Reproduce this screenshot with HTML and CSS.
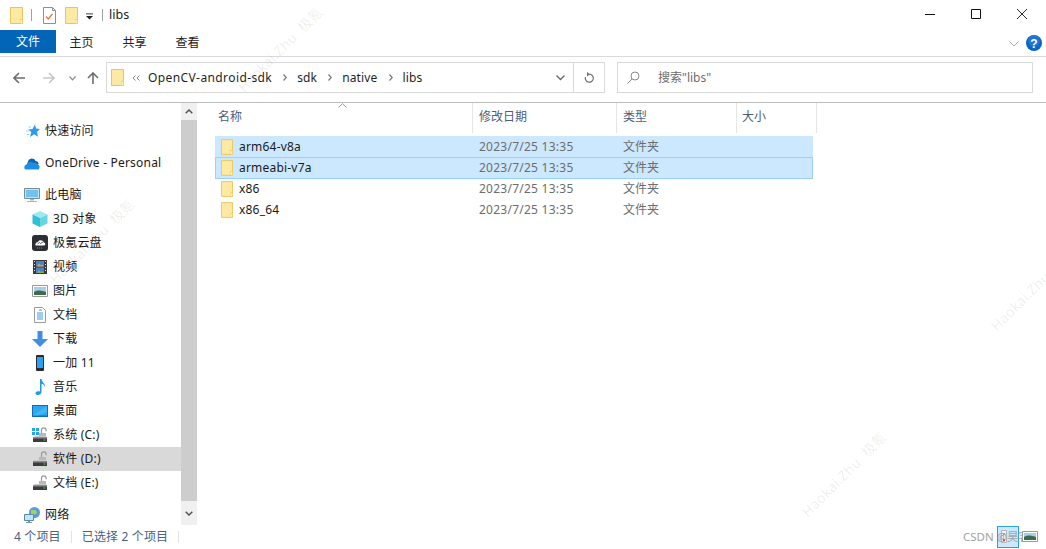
FILE: index.html
```html
<!DOCTYPE html>
<html lang="zh">
<head>
<meta charset="utf-8">
<title>libs</title>
<link rel="stylesheet" href="styles.css">
</head>
<body>
<svg class="defs" width="0" height="0" aria-hidden="true">
  <symbol id="folder" viewBox="0 0 13 17">
    <path d="M.5.5h12v16H.5z" fill="#fde9a3" stroke="#eac558"/>
    <path d="M10 12h3v5h-3z" fill="#f2cf6a"/>
    <path d="M10.5 13h1.5v3h-1.5z" fill="#fff3c4"/>
  </symbol>
  <symbol id="drive" viewBox="0 0 16 16">
    <path d="M9.500 6.500V3.200a2.300 2.300 0 0 1 4.600 0v1" fill="none" stroke="#9a9a9a" stroke-width="1.200"/>
    <path d="M7 6h7v3.500H7z" fill="#b9b9b9"/>
    <path d="M1 10.500 3 9h11l1 1.500z" fill="#c9c9c9"/>
    <path d="M1 10.500h14V15H1z" fill="#3c3c3c"/>
    <path d="M1 10.500h14v1H1z" fill="#8d8d8d"/>
    <path d="M11.500 12.500h2v1h-2z" fill="#45d64b"/>
  </symbol>
</svg>

<div class="window">
  <header class="titlebar">
    <svg class="ic-folder tb-first"><use href="#folder"/></svg>
    <span class="tb-sep"></span>
    <svg class="ic-check" viewBox="0 0 13 17">
      <path d="M.5.500h9l3 3v13H.5z" fill="#fff" stroke="#8f8f8f"/>
      <path d="M9.500.500v3h3" fill="none" stroke="#8f8f8f"/>
      <path d="M3 9.500l2.200 2.500L9.500 7" fill="none" stroke="#e8703f" stroke-width="1.200"/>
    </svg>
    <svg class="ic-folder tb-second"><use href="#folder"/></svg>
    <svg class="ic-qat" viewBox="0 0 8 7">
      <path d="M0 0h8v1H0z" fill="#222"/><path d="M0 3h8L4 7z" fill="#222"/>
    </svg>
    <span class="tb-sep tb-sep2"></span>
    <span class="tb-title">libs</span>
    <div class="controls">
      <span class="ctl"><svg class="ic-ctl" viewBox="0 0 10 10"><path d="M0 5.500h10" stroke="#111"/></svg></span>
      <span class="ctl"><svg class="ic-ctl" viewBox="0 0 10 10"><path d="M.5.500h9v9h-9z" fill="none" stroke="#111"/></svg></span>
      <span class="ctl"><svg class="ic-ctl" viewBox="0 0 10 10"><path d="M0 0l10 10M10 0L0 10" stroke="#111" stroke-width=".9"/></svg></span>
    </div>
  </header>

  <nav class="ribbon">
    <span class="tab tab-file">文件</span>
    <span class="tab">主页</span>
    <span class="tab">共享</span>
    <span class="tab">查看</span>
    <svg class="ic-collapse" viewBox="0 0 10 6"><path d="M.5.500 5 5 9.500.500" fill="none" stroke="#a8a8a8"/></svg>
    <svg class="ic-help" viewBox="0 0 16 16">
      <circle cx="8" cy="8" r="8" fill="#0a66c2"/>
      <circle cx="8" cy="6" r="6" fill="#2f86dc" opacity=".5"/>
      <text x="8" y="12.500" text-anchor="middle" class="help-q">?</text>
    </svg>
  </nav>

  <div class="navbar">
    <svg class="ic-nav nav-back" viewBox="0 0 12 12"><path d="M12 6H1.500M6 1 1 6l5 5" fill="none" stroke="#6e6e6e" stroke-width="1.600"/></svg>
    <svg class="ic-nav nav-fwd" viewBox="0 0 12 12"><path d="M0 6h10.500M6 1l5 5-5 5" fill="none" stroke="#c8c8c8" stroke-width="1.600"/></svg>
    <svg class="ic-recent" viewBox="0 0 7 5"><path d="M.5.500 3.500 3.800 6.500.500" fill="none" stroke="#8a8a8a" stroke-width="1.200"/></svg>
    <svg class="ic-nav nav-up" viewBox="0 0 12 12"><path d="M6 12V1.500M1 6l5-5 5 5" fill="none" stroke="#6e6e6e" stroke-width="1.600"/></svg>
    <div class="address">
      <svg class="ic-folder addr-folder"><use href="#folder"/></svg>
      <svg class="ic-more" viewBox="0 0 8 6"><path d="M3.500.500 1 3l2.500 2.500M7.500.500 5 3l2.500 2.500" fill="none" stroke="#8a8a8a"/></svg>
      <span class="crumb crumb-long">OpenCV-android-sdk</span>
      <svg class="ic-crumb" viewBox="0 0 4 7"><path d="M.5.500 3.200 3.500.5 6.500" fill="none" stroke="#7a7a7a" stroke-width="1.200"/></svg>
      <span class="crumb">sdk</span>
      <svg class="ic-crumb" viewBox="0 0 4 7"><path d="M.5.500 3.200 3.500.5 6.500" fill="none" stroke="#7a7a7a" stroke-width="1.200"/></svg>
      <span class="crumb">native</span>
      <svg class="ic-crumb" viewBox="0 0 4 7"><path d="M.5.500 3.200 3.500.5 6.500" fill="none" stroke="#7a7a7a" stroke-width="1.200"/></svg>
      <span class="crumb">libs</span>
      <svg class="ic-addr-down" viewBox="0 0 9 6"><path d="M.5.500 4.500 4.500 8.500.500" fill="none" stroke="#666" stroke-width="1.300"/></svg>
      <span class="refresh">
        <svg class="ic-refresh" viewBox="0 0 10 11"><path d="M5.500 2.200A4 4 0 1 1 1.500 5" fill="none" stroke="#6e6e6e" stroke-width="1.200"/><path d="M3 0l3 2.200L3 4.400z" fill="#6e6e6e"/></svg>
      </span>
    </div>
    <div class="search">
      <svg class="ic-search" viewBox="0 0 13 13"><circle cx="8" cy="5" r="4" fill="none" stroke="#8a8a8a"/><path d="M5 8 .5 12.500" stroke="#8a8a8a"/></svg>
      <span class="search-text">搜索"libs"</span>
    </div>
  </div>

  <main class="main">
    <aside class="sidebar">
      <div class="side-row lv1">
        <svg class="side-ic" viewBox="0 0 16 16"><path d="M11 1.500l1 4 4 .5-3 2.800 1 5-3.800-2.500L6 14l1.300-5L4 6.500 8.500 6z" fill="#2d9cf0"/><path d="M4.500 4H7M2 8h2.500M3 11.500h2.500" stroke="#9ed2f7"/></svg>
        <span>快速访问</span>
      </div>
      <div class="side-row lv1 gap">
        <svg class="side-ic" viewBox="0 0 16 16"><path d="M4 6.500C5 3 10 2.500 11.500 6c2 .2 3 1.500 3.200 3L8 13 3 9z" fill="#0f62b4"/><path d="M1.500 14.500C-.5 13.500 0 9.500 3.500 9c.8-2 3.500-3 5.500-1.200 2-.8 3.800 0 4.500 1.700 2 0 3 2.800 1 5z" fill="#1c8fe3"/></svg>
        <span>OneDrive - Personal</span>
      </div>
      <div class="side-row lv1 gap">
        <svg class="side-ic" viewBox="0 0 16 16"><path d="M.5 1.500h15v10H.5z" fill="#bfe6fb" stroke="#7d8a94"/><path d="M2 3h12v7H2z" fill="#6fc3f0"/><path d="M6 12h4v1.500H6zM3 14h10v1H3z" fill="#a8b4bc"/></svg>
        <span>此电脑</span>
      </div>
      <div class="side-row lv2">
        <svg class="side-ic" viewBox="0 0 16 16"><path d="M8 0l7.500 3.500L8 7 .5 3.500z" fill="#9ee9ef"/><path d="M.5 3.500 8 7v9L.5 12.500z" fill="#2fc0d3"/><path d="M15.500 3.500 8 7v9l7.500-3.500z" fill="#68d6e2"/></svg>
        <span>3D 对象</span>
      </div>
      <div class="side-row lv2">
        <svg class="side-ic" viewBox="0 0 16 16"><rect width="16" height="16" rx="3" fill="#2c2e33"/><path d="M4 10.500h8c1.800 0 1.800-3-.2-3C11 4.500 6.500 4.500 6 7c-2-.3-3.500 3.500-2 3.500z" fill="#fff"/><path d="M5.500 9l2-1.500 1 1L11 7" fill="none" stroke="#2c2e33" stroke-width=".8"/><path d="M5 13h6" stroke="#888" stroke-dasharray="1 1"/></svg>
        <span>极氪云盘</span>
      </div>
      <div class="side-row lv2">
        <svg class="side-ic" viewBox="0 0 16 16"><path d="M1 1h14v14H1z" fill="#3a3a3a"/><path d="M4 2h8v5.500H4z" fill="#4e7fc9"/><path d="M4 8.500h8V14H4z" fill="#4e7fc9"/><path d="M5 7.500l2-3 2 2 1-1 2 2z" fill="#d9a83a"/><path d="M5 14l2-3 2 2 1-1 2 2z" fill="#8cb04a"/><path d="M2 2h1v1H2zM2 5h1v1H2zM2 8h1v1H2zM2 11h1v1H2zM13 2h1v1h-1zM13 5h1v1h-1zM13 8h1v1h-1zM13 11h1v1h-1z" fill="#ddd"/></svg>
        <span>视频</span>
      </div>
      <div class="side-row lv2">
        <svg class="side-ic" viewBox="0 0 16 16"><path d="M.5 2.500h15v11H.5z" fill="#fff" stroke="#9a9a9a"/><path d="M2 4h12v8H2z" fill="#a9cfe8"/><path d="M2 9c3-2 6-2 12 0v3H2z" fill="#3f6b4d"/></svg>
        <span>图片</span>
      </div>
      <div class="side-row lv2">
        <svg class="side-ic" viewBox="0 0 16 16"><path d="M2.500.500h8l3 3v12h-11z" fill="#fff" stroke="#9a9a9a"/><path d="M7 3h3M5 6h6M5 8h6M5 10h6M5 12h6" stroke="#3a9ae0"/></svg>
        <span>文档</span>
      </div>
      <div class="side-row lv2">
        <svg class="side-ic" viewBox="0 0 16 16"><path d="M5.500 0h5v8H16l-8 8-8-8h5.500z" fill="#3f8fdc"/></svg>
        <span>下载</span>
      </div>
      <div class="side-row lv2">
        <svg class="side-ic" viewBox="0 0 16 16"><rect x="4" y="0" width="8" height="16" rx="1" fill="#2b2b2b"/><path d="M5 2h6v11H5z" fill="#25a4f5"/></svg>
        <span>一加 11</span>
      </div>
      <div class="side-row lv2">
        <svg class="side-ic" viewBox="0 0 16 16"><path d="M8 0h1.500c0 3 4 4 3.500 8-.5-2-2-3-3.500-3.200V13c0 2-2 3-4 3s-2.800-2-1-3.200c1-.6 2.500-.6 3.500-.2z" fill="#1a9bef"/></svg>
        <span>音乐</span>
      </div>
      <div class="side-row lv2">
        <svg class="side-ic" viewBox="0 0 16 16"><path d="M0 2h16v12H0z" fill="#0d6fb5"/><path d="M1 3h14v9.500H1z" fill="#2aa9f2"/><path d="M15 3v6l-9 3.500H1z" fill="#53bff6" opacity=".6"/></svg>
        <span>桌面</span>
      </div>
      <div class="side-row lv2">
        <svg class="side-ic" viewBox="0 0 16 16"><use href="#drive"/><path d="M0 1h3v3H0zM4 1h3v3H4zM0 5h3v3H0zM4 5h3v3H4z" fill="#26a4ee"/></svg>
        <span>系统 (C:)</span>
      </div>
      <div class="side-row lv2 is-current">
        <svg class="side-ic"><use href="#drive"/></svg>
        <span>软件 (D:)</span>
      </div>
      <div class="side-row lv2">
        <svg class="side-ic"><use href="#drive"/></svg>
        <span>文档 (E:)</span>
      </div>
      <div class="side-row lv1 gap">
        <svg class="side-ic" viewBox="0 0 16 16"><circle cx="10.500" cy="5.500" r="5.500" fill="#5a9bd8"/><path d="M7 3c2-1 3 1 5 0l1 3-3 2-3-1z" fill="#9fd06a"/><path d="M.5 7.500h9v6h-9z" fill="#bfe6fb" stroke="#5d87a8"/><path d="M4 14h2v1H4zM2 15h6v1H2z" fill="#7d93a4"/></svg>
        <span>网络</span>
      </div>
    </aside>

    <div class="scrollbar">
      <span class="sb-btn"><svg class="ic-sb" viewBox="0 0 8 5"><path d="M.7 4.300 4 1l3.300 3.300" fill="none" stroke="#555" stroke-width="1.500"/></svg></span>
      <span class="sb-thumb"></span>
      <span class="sb-btn sb-btn-down"><svg class="ic-sb" viewBox="0 0 8 5"><path d="M.7.700 4 4 7.300.700" fill="none" stroke="#555" stroke-width="1.500"/></svg></span>
    </div>

    <section class="content">
      <div class="thead">
        <span class="th th-name">名称<svg class="ic-sort" viewBox="0 0 9 5"><path d="M.5 4.500 4.500.700 8.500 4.500" fill="none" stroke="#9a9a9a"/></svg></span>
        <span class="th th-date">修改日期</span>
        <span class="th th-type">类型</span>
        <span class="th th-size">大小</span>
      </div>
      <div class="rows">
        <div class="row selected">
          <span class="cell-name"><svg class="ic-folder"><use href="#folder"/></svg>arm64-v8a</span>
          <span class="cell-meta">2023/7/25 13:35</span>
          <span class="cell-meta cell-type">文件夹</span>
        </div>
        <div class="row selected focused">
          <span class="cell-name"><svg class="ic-folder"><use href="#folder"/></svg>armeabi-v7a</span>
          <span class="cell-meta">2023/7/25 13:35</span>
          <span class="cell-meta cell-type">文件夹</span>
        </div>
        <div class="row">
          <span class="cell-name"><svg class="ic-folder"><use href="#folder"/></svg>x86</span>
          <span class="cell-meta">2023/7/25 13:35</span>
          <span class="cell-meta cell-type">文件夹</span>
        </div>
        <div class="row">
          <span class="cell-name"><svg class="ic-folder"><use href="#folder"/></svg>x86_64</span>
          <span class="cell-meta">2023/7/25 13:35</span>
          <span class="cell-meta cell-type">文件夹</span>
        </div>
      </div>
    </section>
  </main>

  <footer class="status">
    <span class="st-count">4 个项目</span>
    <span class="st-sep"></span>
    <span class="st-sel">已选择 2 个项目</span>
    <span class="st-sep"></span>
  </footer>

  <span class="wm wm-a">Haokai.Zhu&nbsp;&nbsp;极氪</span>
  <span class="wm wm-b">Haokai.Zhu&nbsp;&nbsp;极氪</span>
  <span class="wm wm-c">Haokai.Zhu&nbsp;&nbsp;极氪</span>
  <span class="wm wm-d">Haokai.Zhu&nbsp;&nbsp;极氪</span>

  <div class="csdn">
    <span class="csdn-box">
      <svg class="csdn-doc" viewBox="0 0 6 13"><path d="M.5.500h5v12h-5z" fill="#eef6fc" stroke="#b5b5b5"/><path d="M2 3h2v2H2z" fill="#999"/><path d="M2 9h2v2H2z" fill="#d9363e"/></svg>
    </span>
    <span class="csdn-text">CSDN @昊客</span>
    <svg class="csdn-pic" viewBox="0 0 16 11"><path d="M.5.500h15v10H.5z" fill="#fff" stroke="#9a9a9a"/><path d="M2 2h12v7H2z" fill="#a9cfe8"/><path d="M2 6c3-2 6-2 12 0v3H2z" fill="#3f6b4d"/></svg>
  </div>
</div>
</body>
</html>
```

FILE: styles.css
```css
* { box-sizing: border-box; }
html, body { margin: 0; padding: 0; background: #fff; }
body {
  font-family: "Noto Sans", "Noto Sans CJK SC", sans-serif;
  font-size: 12px;
  color: #1a1a1a;
  line-height: 16px;
}
svg { display: block; flex: none; }
.defs { position: absolute; }
.window {
  position: relative;
  width: 1046px;
  height: 549px;
  overflow: hidden;
  display: flex;
  flex-direction: column;
  background: #fff;
}

/* title bar */
.titlebar { height: 30px; display: flex; align-items: center; flex: none; padding-left: 10px; }
.ic-folder { width: 13px; height: 17px; }
.tb-first { margin-right: 8px; }
.tb-sep { width: 1px; height: 12px; background: #a0a0a0; margin-right: 11px; }
.ic-check { width: 13px; height: 17px; margin-right: 9px; }
.tb-second { margin-right: 8px; }
.ic-qat { width: 7px; height: 7px; margin-top: 2px; margin-right: 9px; }
.tb-sep2 { margin-right: 7px; }
.tb-title { font-size: 12.500px; color: #222; margin-left: -1px; }
.controls { margin-left: auto; display: flex; padding-right: 1px; }
.ctl { width: 46px; height: 30px; display: flex; align-items: center; justify-content: center; }
.ic-ctl { width: 10px; height: 10px; margin-bottom: 2px; }

/* ribbon */
.ribbon {
  height: 27px;
  flex: none;
  display: flex;
  align-items: flex-start;
  border-bottom: 1px solid #dadada;
  padding-right: 4px;
}
.tab { width: 53px; height: 23px; padding-top: 2px; display: flex; align-items: center; justify-content: center; color: #222; }
.tab-file { width: 56px; background: #0365b8; color: #fff; margin-right: -1px; padding-top: 1px; }
.ic-collapse { width: 10px; height: 6px; margin-left: auto; margin-top: 11px; margin-right: 7px; }
.ic-help { width: 16px; height: 16px; margin-top: 5px; }
.help-q { font-family: "Liberation Sans", sans-serif; font-size: 12px; font-weight: 700; fill: #fff; }

/* nav bar */
.navbar {
  height: 46px;
  flex: none;
  display: flex;
  align-items: flex-start;
  border-bottom: 1px solid #bdbdbd;
  padding: 5px 0 0 13px;
}
.ic-nav { width: 12px; height: 12px; margin-top: 10px; }
.nav-fwd { margin-left: 18px; }
.ic-recent { width: 7px; height: 5px; margin: 14px 0 0 14px; }
.nav-up { margin-left: 11px; margin-right: 7px; }
.address {
  width: 499px;
  height: 31px;
  border: 1px solid #d9d9d9;
  display: flex;
  align-items: center;
  padding-left: 4px;
}
.addr-folder { margin-right: 8px; }
.ic-more { width: 8px; height: 6px; margin-right: 8px; }
.crumb { color: #1f1f1f; letter-spacing: .15px; }
.crumb-long { letter-spacing: .4px; }
.ic-crumb { width: 4px; height: 7px; margin: 0 10px 0 11px; }
.ic-addr-down { width: 9px; height: 6px; margin-left: auto; margin-right: 8px; }
.refresh { width: 31px; height: 29px; border-left: 1px solid #d9d9d9; display: flex; align-items: center; justify-content: center; }
.ic-refresh { width: 10px; height: 11px; }
.search {
  width: 416px;
  height: 31px;
  margin-left: 12px;
  border: 1px solid #d9d9d9;
  display: flex;
  align-items: center;
  padding-left: 9px;
  color: #6d6d6d;
}
.ic-search { width: 13px; height: 13px; margin-right: 18px; }

/* main */
.main { flex: 1; display: flex; min-height: 0; }
.sidebar { width: 181px; flex: none; padding-top: 16px; }
.side-row { height: 24px; display: flex; align-items: center; color: #1a1a1a; letter-spacing: .2px; }
.side-row.gap { margin-top: 8px; }
.lv1 { padding-left: 24px; }
.lv2 { padding-left: 32px; }
.side-ic { width: 16px; height: 16px; margin-right: 5px; }
.is-current { background: #d9d9d9; }

.scrollbar { width: 16px; flex: none; display: flex; flex-direction: column; background: #f0f0f0; }
.sb-btn { height: 17px; flex: none; display: flex; align-items: center; justify-content: center; }
.sb-btn-down { height: 24px; }
.sb-thumb { flex: 1; background: #cdcdcd; }
.ic-sb { width: 8px; height: 5px; }

.content { flex: 1; min-width: 0; }
.thead { height: 30px; display: flex; color: #4c607a; }
.th { display: flex; align-items: center; padding-left: 6px; border-right: 1px solid #e5e5e5; position: relative; padding-bottom: 3px; }
.th-name { width: 276px; padding-left: 21px; }
.th-date { width: 144px; }
.th-type { width: 120px; }
.th-size { width: 80px; padding-left: 5px; }
.ic-sort { position: absolute; left: 141px; top: 0; width: 9px; height: 5px; }
.rows { padding: 3px 0 0 18px; }
.row { width: 598px; height: 21px; display: grid; grid-template-columns: 264px 144px 1fr; align-items: center; }
.row.selected { background: #cce8ff; }
.row.focused { box-shadow: inset 0 0 0 1px #99d1ff; height: 22px; margin-bottom: -1px; }
.cell-name { display: flex; align-items: center; padding-left: 6px; color: #1a1a1a; letter-spacing: .2px; }
.cell-name .ic-folder { margin-right: 6px; width: 12px; height: 16px; }
.cell-meta { color: #6d6d6d; letter-spacing: .25px; }
.cell-type { letter-spacing: 0; }

/* status */
.status { height: 24px; flex: none; display: flex; align-items: center; padding-left: 14px; color: #4c607a; letter-spacing: .15px; }
.st-sep { width: 1px; height: 12px; background: #e3e3e3; margin: 0 10px; }

/* overlays */
.wm {
  position: absolute;
  font-size: 14px;
  letter-spacing: .2px;
  white-space: nowrap;
  color: rgba(0, 0, 0, .08);
  transform: rotate(-45deg);
  transform-origin: 0 100%;
  line-height: 16px;
  pointer-events: none;
}
.wm-a { left: 246px; top: 79px; }
.wm-b { left: 58px; top: 271px; }
.wm-c { left: 810px; top: 504px; }
.wm-d { left: 999px; top: 318px; }

.csdn { position: absolute; left: 963px; top: 526px; width: 75px; height: 22px; display: flex; align-items: center; }
.csdn-text { color: #a3a3a3; white-space: nowrap; position: relative; z-index: 1; font-size: 11.500px; }
.csdn-box { position: absolute; left: 34px; top: 0; width: 22px; height: 22px; background: #cce8ff; border: 1px solid #2ba0dc; padding: 3px 0 0 3px; }
.csdn-doc { width: 6px; height: 13px; }
.csdn-pic { position: absolute; left: 59px; top: 5px; width: 16px; height: 11px; z-index: 2; }
```
